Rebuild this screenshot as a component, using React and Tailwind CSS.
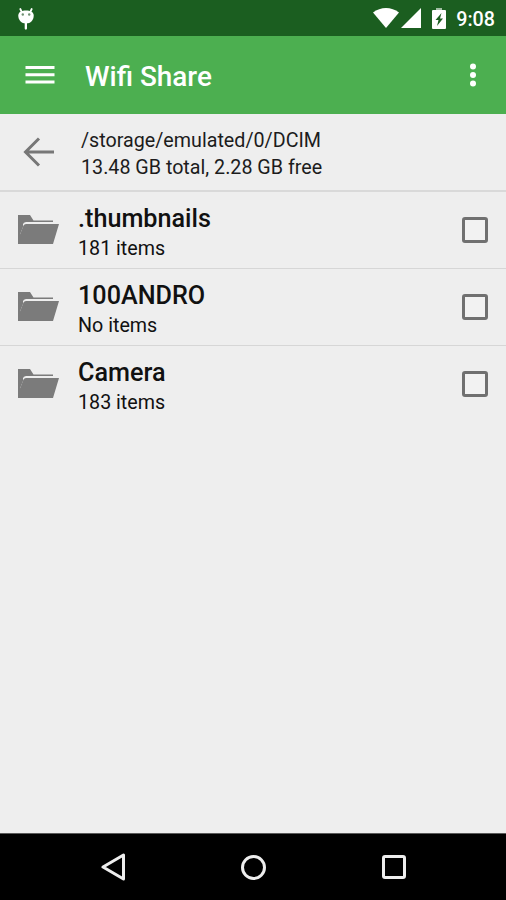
// App.jsx
const folders = [
  { name: ".thumbnails", info: "181 items" },
  { name: "100ANDRO", info: "No items" },
  { name: "Camera", info: "183 items" },
];

const StatusBar = () => (
  <div className="flex h-9 items-center bg-[#1b5e20] pl-[17px] pr-[11px] text-white">
    <svg width="18" height="24" viewBox="0 0 18 24" fill="currentColor">
      <path
        d="M3.300 3 4.500 5.500M14.700 3l-1.200 2.500"
        stroke="currentColor"
        strokeWidth="1.8"
        strokeLinecap="round"
      />
      <path d="M1.300 9.500C1.300 6 4.800 4.600 9 4.600s7.700 1.400 7.700 4.900c0 4.500-3 8-7.700 8S1.300 14 1.300 9.500Z" />
      <path d="M7.700 16.500h2.300v6a1.100 1.100 0 0 1-2.300 0Z" />
      <circle cx="5.800" cy="8.500" r="1.200" fill="#6f9172" />
      <circle cx="12.200" cy="8.500" r="1.200" fill="#6f9172" />
    </svg>
    <div className="ml-auto flex items-center">
      <svg width="26" height="20" viewBox="0 0 26 20" fill="currentColor">
        <path d="M0 4.500C7.500-1.500 18.500-1.500 26 4.500L13 20Z" />
      </svg>
      <svg
        className="ml-[2px]"
        width="20"
        height="20"
        viewBox="0 0 20 20"
        fill="currentColor"
      >
        <path d="M20 0v20H0Z" />
      </svg>
      <svg
        className="ml-[11px] mt-px"
        width="14"
        height="22"
        viewBox="0 0 14 22"
        fill="currentColor"
      >
        <path d="M4 0h6v2H4Z" fillOpacity="0.6" />
        <path d="M1 2h12a1 1 0 0 1 1 1v17a1 1 0 0 1-1 1H1a1 1 0 0 1-1-1V3a1 1 0 0 1 1-1Z" />
        <path d="M9.500 5 3.500 12h3L5 18l6-7.500H8Z" fill="#1b5e20" />
      </svg>
      <span className="ml-[10px] pt-[3px] text-[19.700px] font-medium leading-8">
        9:08
      </span>
    </div>
  </div>
);

const AppBar = () => (
  <div className="flex h-[78px] items-center bg-[#4caf50] pl-[25px] pr-[29px] text-white">
    <svg width="30" height="20" viewBox="0 0 30 20" fill="currentColor">
      <path d="M0.500 1h29v3h-29ZM0.500 8.300h29v3h-29ZM0.500 15.500h29v3h-29Z" />
    </svg>
    <h1 className="ml-[30px] pt-[3px] text-[27.900px] font-medium leading-8">
      Wifi Share
    </h1>
    <svg
      className="ml-auto"
      width="8"
      height="24"
      viewBox="0 0 8 24"
      fill="currentColor"
    >
      <circle cx="4" cy="3.500" r="3" />
      <circle cx="4" cy="12" r="3" />
      <circle cx="4" cy="20.500" r="3" />
    </svg>
  </div>
);

const PathHeader = () => (
  <div className="flex h-[78px] items-center border-b-2 border-[#d9d9d9] pl-[22px]">
    <svg
      width="34"
      height="30"
      viewBox="0 0 34 30"
      fill="none"
      stroke="#777777"
      strokeWidth="3"
    >
      <path d="M32 15H3M17 1.500 3.500 15 17 28.500" />
    </svg>
    <div className="ml-[25px] pt-1 text-[19.700px] leading-[27px] text-[#1c1c1c]">
      <p>/storage/emulated/0/DCIM</p>
      <p>13.48 GB total, 2.28 GB free</p>
    </div>
  </div>
);

const FolderIcon = () => (
  <svg width="42" height="30" viewBox="0 0 42 30" fill="#7b7b7b">
    <path d="M0 0h12l3.500 5.500h19.500v1.500H8Q5.500 7 4.800 9.500L2 19v10H0Z" />
    <path d="M0 0h5v12L2 19v10H0Z" />
    <path d="M0 29V20h1.800L5.500 10.500Q6.200 9 8 9H41L35 29Z" />
  </svg>
);

const FolderRow = ({ name, info, last }) => (
  <div
    className={`flex h-[77px] items-center border-b pl-[18px] pr-[18px] ${
      last ? "border-transparent" : "border-[#d6d6d6]"
    }`}
  >
    <FolderIcon />
    <div className="ml-[18px] pt-[7px] text-[#111111]">
      <p className="text-[25.200px] font-medium leading-[30px]">{name}</p>
      <p className="text-[19.700px] leading-[29px]">{info}</p>
    </div>
    <div className="ml-auto size-[26px] rounded-[3px] border-[3px] border-[#707070] bg-[#f2f2f2]" />
  </div>
);

const NavBar = () => (
  <div className="flex h-[67px] items-center justify-between border-t border-[#5a5a5a] bg-black pl-[100px] pr-[100px]">
    <svg
      width="26"
      height="28"
      viewBox="0 0 26 28"
      fill="none"
      stroke="#eeeeee"
      strokeWidth="3"
      strokeLinejoin="round"
    >
      <path d="M23.500 2v24L3 14Z" />
    </svg>
    <div className="mr-px size-[25px] rounded-full border-[3px] border-[#eeeeee]" />
    <div className="size-6 rounded-[3px] border-[3px] border-[#eeeeee]" />
  </div>
);

const App = () => {
  return (
    <div className="flex h-[900px] w-[506px] flex-col overflow-hidden bg-[#eeeeee] font-['Roboto',sans-serif]">
      <StatusBar />
      <AppBar />
      <PathHeader />
      <div className="flex-1">
        {folders.map((folder, index) => (
          <FolderRow
            key={folder.name}
            name={folder.name}
            info={folder.info}
            last={index === folders.length - 1}
          />
        ))}
      </div>
      <NavBar />
    </div>
  );
};

export default App;
